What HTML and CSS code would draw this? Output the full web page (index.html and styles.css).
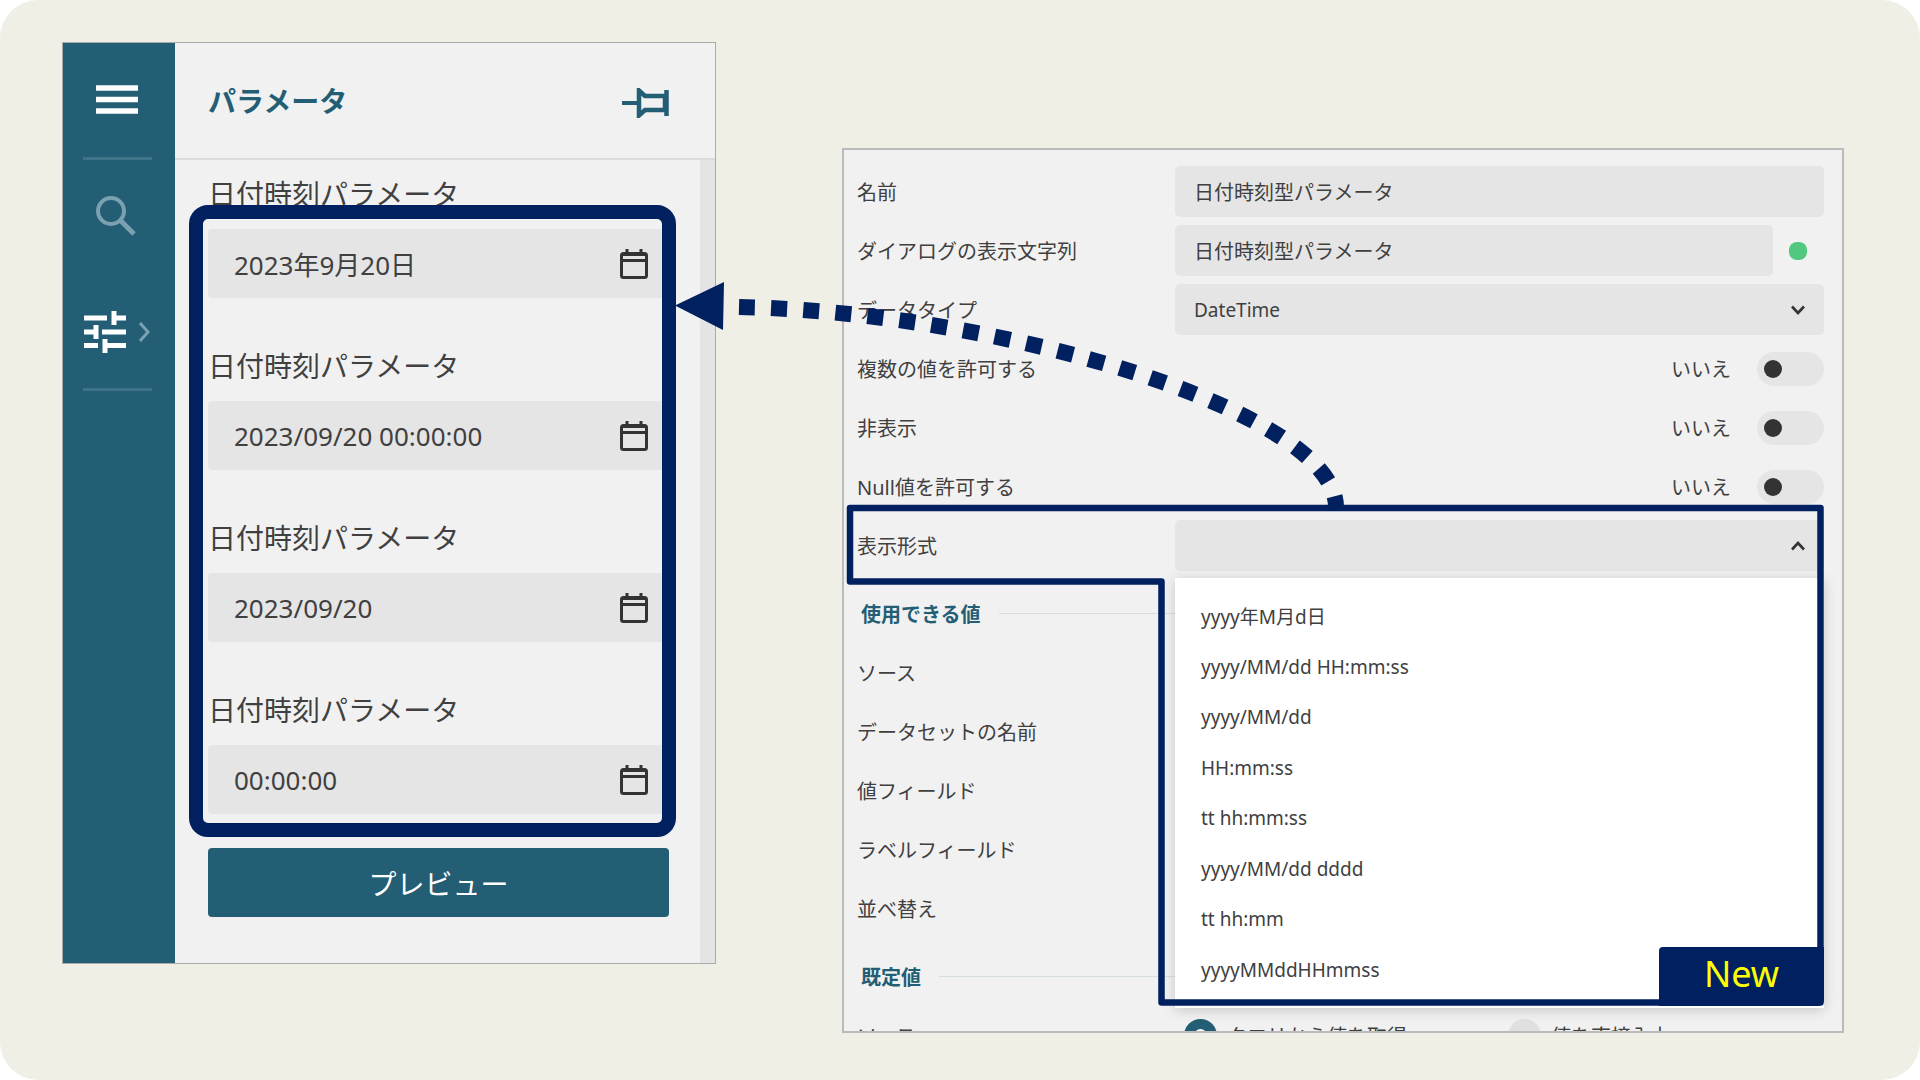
FILE: index.html
```html
<!DOCTYPE html>
<html lang="ja">
<head>
<meta charset="utf-8">
<title>日付時刻パラメータの表示形式</title>
<link rel="stylesheet" href="styles.css">
</head>
<body>
<svg class="defs" aria-hidden="true">
  <symbol id="calendar" viewBox="0 0 30 32">
    <rect x="2.5" y="5.5" width="25" height="24" rx="2" fill="none" stroke="currentColor" stroke-width="3"/>
    <path d="M2 12.500H28M8 1V6M22 1V6" fill="none" stroke="currentColor" stroke-width="3"/>
    <path d="M2 7H28" stroke="currentColor" stroke-width="2"/>
  </symbol>
  <symbol id="chevron" viewBox="0 0 16 12">
    <path d="M2 2.500L8 9L14 2.500" fill="none" stroke="currentColor" stroke-width="2.600"/>
  </symbol>
</svg>
<main class="board">
  <section class="viewer">
    <nav class="rail">
      <button class="rail-button" type="button" aria-label="メニュー">
        <svg width="44" height="32" viewBox="0 0 44 32"><path d="M1 4H43M1 15.500H43M1 27H43" stroke="#fff" stroke-width="5.500"/></svg>
      </button>
      <hr class="rail-line">
      <button class="rail-button" type="button" aria-label="検索">
        <svg width="42" height="42" viewBox="0 0 42 42"><circle cx="15" cy="15" r="13" fill="none" stroke="#7ba0b0" stroke-width="4"/><path d="M24.500 24.500L38 38" stroke="#7ba0b0" stroke-width="5"/></svg>
      </button>
      <button class="rail-button" type="button" aria-label="パラメータ">
        <svg width="66" height="44" viewBox="0 0 66 44"><path d="M0 9H23M28 9H42M0 23H11M18 23H42M0 36.500H14M21 36.500H42M30 2V16M12 16V30M21 30V44" fill="none" stroke="#fff" stroke-width="5"/><path d="M56 14L64 23L56 32" fill="none" stroke="#7ba0b0" stroke-width="3"/></svg>
      </button>
      <hr class="rail-line">
    </nav>
    <div class="panel">
      <header class="panel-head">
        <h1 class="panel-title">パラメータ</h1>
        <button class="pin" type="button" aria-label="固定">
          <svg width="48" height="30" viewBox="0 0 48 30"><path d="M0 15H16" stroke="#235e75" stroke-width="4"/><path d="M17 2.500V27.500L23 22H43V8H23ZM44.500 2V28" fill="none" stroke="#235e75" stroke-width="4.500"/></svg>
        </button>
      </header>
      <form class="panel-body">
        <div class="params">
          <div class="param">
            <label class="param-label" for="p1">日付時刻パラメータ</label>
            <div class="date"><input class="date-input" id="p1" type="text" value="2023年9月20日"><svg class="date-icon"><use href="#calendar"/></svg></div>
          </div>
          <div class="param">
            <label class="param-label" for="p2">日付時刻パラメータ</label>
            <div class="date"><input class="date-input" id="p2" type="text" value="2023/09/20 00:00:00"><svg class="date-icon"><use href="#calendar"/></svg></div>
          </div>
          <div class="param">
            <label class="param-label" for="p3">日付時刻パラメータ</label>
            <div class="date"><input class="date-input" id="p3" type="text" value="2023/09/20"><svg class="date-icon"><use href="#calendar"/></svg></div>
          </div>
          <div class="param">
            <label class="param-label" for="p4">日付時刻パラメータ</label>
            <div class="date"><input class="date-input" id="p4" type="text" value="00:00:00"><svg class="date-icon"><use href="#calendar"/></svg></div>
          </div>
          <div class="params-frame"></div>
        </div>
        <button class="preview" type="button">プレビュー</button>
      </form>
    </div>
  </section>

  <section class="settings">
    <form class="form">
      <div class="row">
        <label class="label" for="name">名前</label>
        <input class="field" id="name" type="text" value="日付時刻型パラメータ">
      </div>
      <div class="row">
        <label class="label" for="prompt">ダイアログの表示文字列</label>
        <div class="with-dot"><input class="field" id="prompt" type="text" value="日付時刻型パラメータ"><span class="dot"></span></div>
      </div>
      <div class="row">
        <label class="label" for="type">データタイプ</label>
        <div class="select"><select class="field" id="type"><option>DateTime</option></select><svg class="chevron"><use href="#chevron"/></svg></div>
      </div>
      <div class="row">
        <label class="label" for="multi">複数の値を許可する</label>
        <div class="switch"><span>いいえ</span><input class="toggle" id="multi" type="checkbox"></div>
      </div>
      <div class="row">
        <label class="label" for="hidden">非表示</label>
        <div class="switch"><span>いいえ</span><input class="toggle" id="hidden" type="checkbox"></div>
      </div>
      <div class="row">
        <label class="label" for="nullable">Null値を許可する</label>
        <div class="switch"><span>いいえ</span><input class="toggle" id="nullable" type="checkbox"></div>
      </div>
      <div class="row">
        <label class="label" for="format">表示形式</label>
        <div class="select">
          <select class="field" id="format"><option></option></select><svg class="chevron chevron-up"><use href="#chevron"/></svg>
          <ul class="menu">
            <li>yyyy年M月d日</li>
            <li>yyyy/MM/dd HH:mm:ss</li>
            <li>yyyy/MM/dd</li>
            <li>HH:mm:ss</li>
            <li>tt hh:mm:ss</li>
            <li>yyyy/MM/dd dddd</li>
            <li>tt hh:mm</li>
            <li>yyyyMMddHHmmss</li>
          </ul>
        </div>
      </div>
      <h2 class="group">使用できる値</h2>
      <div class="row"><span class="label">ソース</span></div>
      <div class="row"><span class="label">データセットの名前</span></div>
      <div class="row"><span class="label">値フィールド</span></div>
      <div class="row"><span class="label">ラベルフィールド</span></div>
      <div class="row"><span class="label">並べ替え</span></div>
      <h2 class="group">既定値</h2>
      <div class="row">
        <span class="label">ソース</span>
        <div class="choices">
          <label class="choice"><input class="radio" type="radio" name="source" checked>クエリから値を取得</label>
          <label class="choice"><input class="radio" type="radio" name="source">値を直接入力</label>
        </div>
      </div>
    </form>
  </section>

  <svg class="callout" viewBox="0 0 1920 1080" aria-hidden="true">
    <path d="M739 307C1003 312 1336 412 1336 507" fill="none" stroke="#002060" stroke-width="16" stroke-dasharray="16 16.200"/>
    <path d="M675 305.500L724 282L723 330Z" fill="#002060"/>
    <path d="M850 508H1820.500V1002.500H1161.500V581.500H850Z" fill="none" stroke="#002060" stroke-width="6.500" stroke-linejoin="round"/>
  </svg>
  <strong class="badge">New</strong>
</main>
</body>
</html>
```
FILE: styles.css
```css
* {
  box-sizing: border-box;
}

body {
  margin: 0;
  background: #fff;
  color: #404040;
  font-family: "Noto Sans", "Noto Sans CJK JP", sans-serif;
  font-size: 19px;
}

button,
input,
select {
  margin: 0;
  border: 0;
  color: inherit;
  font: inherit;
}

.defs {
  display: none;
}

.board {
  position: relative;
  display: grid;
  grid-template-columns: 654fr 1002fr;
  column-gap: 126px;
  height: 100vh;
  padding: 42px 76px 47px 62px;
  border-radius: 38px;
  background: #efefe6;
  overflow: hidden;
}

/* Report viewer with its parameter panel */

.viewer {
  display: flex;
  align-self: start;
  border: 1px solid #aaa;
  background: #f1f1f1;
}

.rail {
  display: flex;
  flex-direction: column;
  width: 112px;
  background: #235e75;
}

.rail-button {
  display: flex;
  align-items: center;
  justify-content: center;
  height: 114px;
  padding: 0 4px 0 0;
  background: none;
}

.rail-line {
  width: 69px;
  height: 3px;
  margin: 0 20px;
  border: 0;
  background: #3f7387;
}

.panel {
  flex: 1;
}

.panel-head {
  display: flex;
  align-items: center;
  justify-content: space-between;
  height: 117px;
  padding: 0 45px 0 33px;
  border-bottom: 2px solid #dcdcdc;
}

.panel-title {
  margin: 0;
  color: #235e75;
  font-size: 28px;
  line-height: 36px;
}

.pin {
  display: flex;
  padding: 4px 0 0;
  background: none;
}

.panel-body {
  padding: 18px 31px 46px 33px;
  border-right: 15px solid #e4e4e4;
}

.params {
  position: relative;
  display: flex;
  flex-direction: column;
  gap: 52px;
}

.params-frame {
  position: absolute;
  inset: 27px -7px -23px -19px;
  border: 14px solid #002060;
  border-radius: 19px;
}

.param {
  display: flex;
  flex-direction: column;
  gap: 15px;
}

.param-label {
  height: 36px;
  font-size: 28px;
  line-height: 32px;
}

.date {
  display: flex;
  align-items: center;
  height: 69px;
  padding: 0 20px 0 26px;
  border-radius: 4px;
  background: #e5e5e5;
}

.date-input {
  flex: 1;
  min-width: 0;
  height: 69px;
  padding: 0;
  background: none;
  font-size: 26px;
}

.date-icon {
  width: 30px;
  height: 32px;
  color: #333;
}

.preview {
  display: block;
  width: 100%;
  height: 69px;
  margin-top: 34px;
  border-radius: 4px;
  background: #235e75;
  color: #fff;
  font-size: 28px;
}

/* Parameter settings */

.settings {
  min-height: 0;
  margin-top: 106px;
  border: 2px solid #bbb;
  background: #f1f1f1;
  overflow: hidden;
}

.form {
  display: flex;
  flex-direction: column;
  gap: 8px;
  padding: 16px 18px 0 13px;
}

.row {
  display: grid;
  grid-template-columns: 318px 1fr;
  align-items: center;
  height: 51px;
}

.label {
  font-size: 20px;
}

.field {
  width: 100%;
  height: 51px;
  padding: 0 19px;
  border-radius: 5px;
  background: #e5e5e5;
  appearance: none;
}

.row .field {
  font-size: 20px;
}

.row select.field {
  font-size: 19px;
}

.with-dot {
  display: flex;
  align-items: center;
  gap: 16px;
  padding-right: 17px;
}

.dot {
  flex: none;
  width: 18px;
  height: 18px;
  border-radius: 8px;
  background: #50c97f;
}

.select {
  position: relative;
}

.chevron {
  position: absolute;
  top: 20px;
  right: 18px;
  width: 16px;
  height: 12px;
  color: #333;
  pointer-events: none;
}

.chevron-up {
  rotate: 180deg;
}

.switch {
  display: flex;
  align-items: center;
  justify-content: flex-end;
  gap: 26px;
  font-size: 20px;
}

.toggle {
  width: 67px;
  height: 34px;
  padding: 8px 7px;
  border-radius: 17px;
  background: #e5e5e5;
  appearance: none;
}

.toggle::before {
  content: "";
  display: block;
  width: 18px;
  height: 18px;
  border-radius: 9px;
  background: #333;
}

.menu {
  position: absolute;
  top: 58px;
  right: 0;
  left: 0;
  display: grid;
  grid-auto-rows: 1fr;
  height: 430px;
  margin: 0;
  padding: 13px 26px;
  background: #fff;
  box-shadow: 0 2px 12px rgba(0, 0, 0, 0.18);
  list-style: none;
}

.menu li {
  display: flex;
  align-items: center;
}

.group {
  display: flex;
  align-items: center;
  gap: 18px;
  height: 60px;
  margin: 0;
  padding: 8px 0 0 4px;
  color: #235e75;
  font-size: 20px;
}

.group::after {
  content: "";
  flex: 1;
  height: 1px;
  background: #d5dfe0;
}

.choices {
  display: grid;
  grid-template-columns: 324px 1fr;
  padding-left: 9px;
}

.choice {
  display: flex;
  align-items: center;
  gap: 10px;
  font-size: 20px;
}

.radio {
  width: 33px;
  height: 33px;
  border-radius: 50%;
  background: #e0e0e0;
  appearance: none;
}

.radio:checked {
  border: 10px solid #235e75;
  background: #fff;
}

/* Callouts drawn over both screens */

.callout {
  position: absolute;
  top: 0;
  left: 0;
  width: 100%;
  height: 100%;
  pointer-events: none;
}

.badge {
  position: absolute;
  right: 96px;
  bottom: 74px;
  width: 165px;
  height: 59px;
  border-radius: 4px 0 6px;
  background: #002060;
  color: #ff0;
  font-size: 36px;
  font-weight: 400;
  line-height: 54px;
  text-align: center;
}
```
